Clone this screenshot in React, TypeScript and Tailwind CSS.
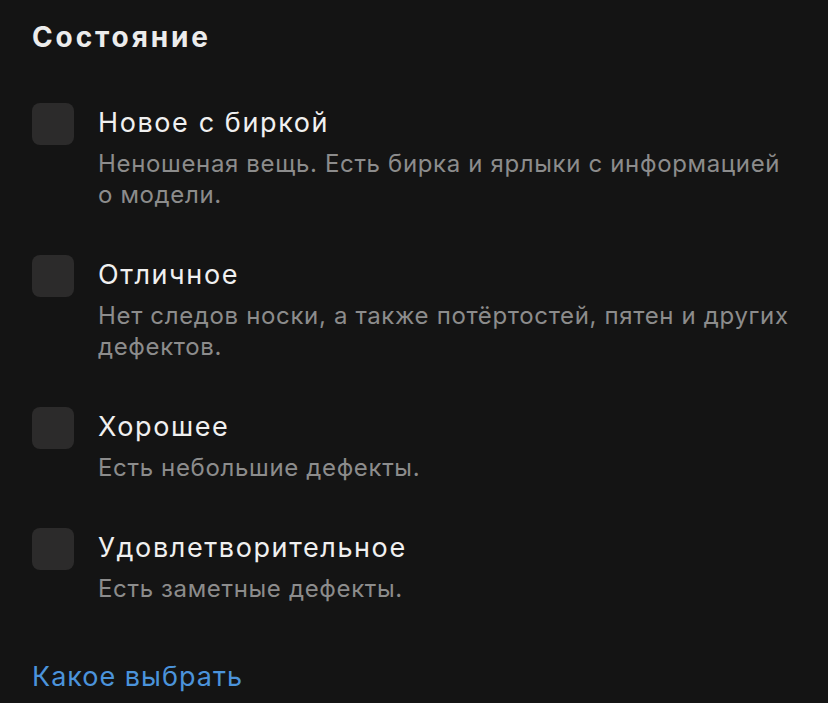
import React from "react";

const items = [
  {
    title: "Новое с биркой",
    desc: "Неношеная вещь. Есть бирка и ярлыки с информацией о модели.",
  },
  {
    title: "Отличное",
    desc: "Нет следов носки, а также потёртостей, пятен и других дефектов.",
  },
  { title: "Хорошее", desc: "Есть небольшие дефекты." },
  { title: "Удовлетворительное", desc: "Есть заметные дефекты." },
];

export default function App() {
  return (
    <div className="min-h-[703px] w-[828px] bg-[#141414] pl-8 pr-[34px] pt-[20px] font-['Inter',_'Noto_Sans',_sans-serif] antialiased">
      <h1 className="text-[28px] font-bold leading-[34px] tracking-[2.9px] text-[#ececec]">
        Состояние
      </h1>
      <div className="mt-[49px] flex flex-col gap-[45px]">
        {items.map((it) => (
          <label key={it.title} className="flex items-start gap-6">
            <span className="h-[42px] w-[42px] shrink-0 rounded-[8px] bg-[#2c2b2b]" />
            <span className="flex min-w-0 flex-col">
              <span className="text-[27px] leading-[40px] tracking-[1.6px] text-[#f0f0f0]">
                {it.title}
              </span>
              <span className="mt-[5px] text-[24px] leading-[31px] tracking-[0.65px] text-[#8c8c8c]">
                {it.desc}
              </span>
            </span>
          </label>
        ))}
      </div>
      <a className="mt-[57px] block text-[27px] leading-[32px] tracking-[1px] text-[#4b93db]">
        Какое выбрать
      </a>
    </div>
  );
}
